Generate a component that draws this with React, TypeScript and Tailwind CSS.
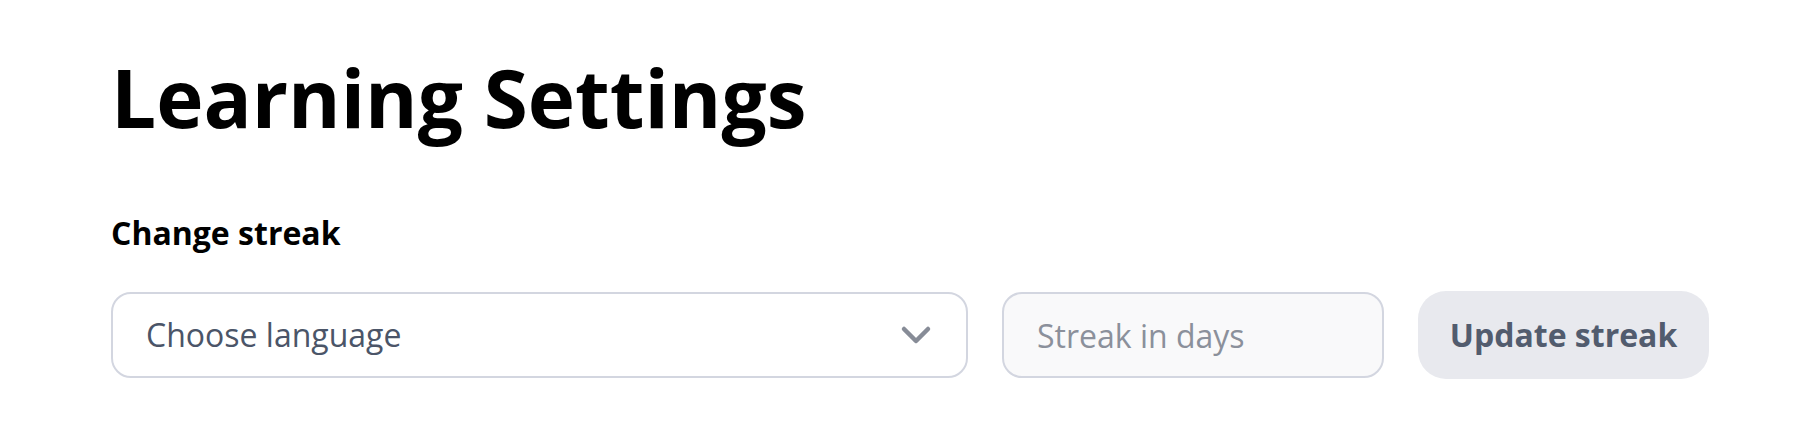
export default function App() {
  return (
    <div className="min-h-screen bg-white pl-[111px] pr-[109px] pt-[57px] font-['Open_Sans',sans-serif] text-black">
      <h1 className="text-[80px] font-bold leading-none">Learning Settings</h1>

      <h2 className="mt-[80px] text-[32px] font-bold leading-none">Change streak</h2>

      <div className="mt-[42px] flex items-center gap-[34px]">
        <button
          type="button"
          className="flex h-[86px] flex-1 items-center justify-between rounded-[20px] border-2 border-[#d3d6e0] bg-white pl-[33px] pr-[34px] text-left"
        >
          <span className="text-[32px] text-[#4b5568]">Choose language</span>
          <svg width="32" height="20" viewBox="0 0 32 20" fill="none" className="text-[#878c97]">
            <polyline
              points="4,4 16,16 28,4"
              stroke="currentColor"
              strokeWidth="4.5"
              strokeLinecap="round"
              strokeLinejoin="round"
            />
          </svg>
        </button>

        <input
          type="text"
          placeholder="Streak in days"
          className="h-[86px] w-[382px] rounded-[20px] border-2 border-[#d3d6e0] bg-[#f9f9fa] px-[33px] text-[32px] text-[#4b5568] placeholder:text-[#8b909b] focus:outline-none"
        />

        <button
          type="button"
          className="h-[88px] w-[291px] rounded-[28px] bg-[#e8e9ee] text-[32px] font-bold text-[#525c6e]"
        >
          Update streak
        </button>
      </div>
    </div>
  );
}
